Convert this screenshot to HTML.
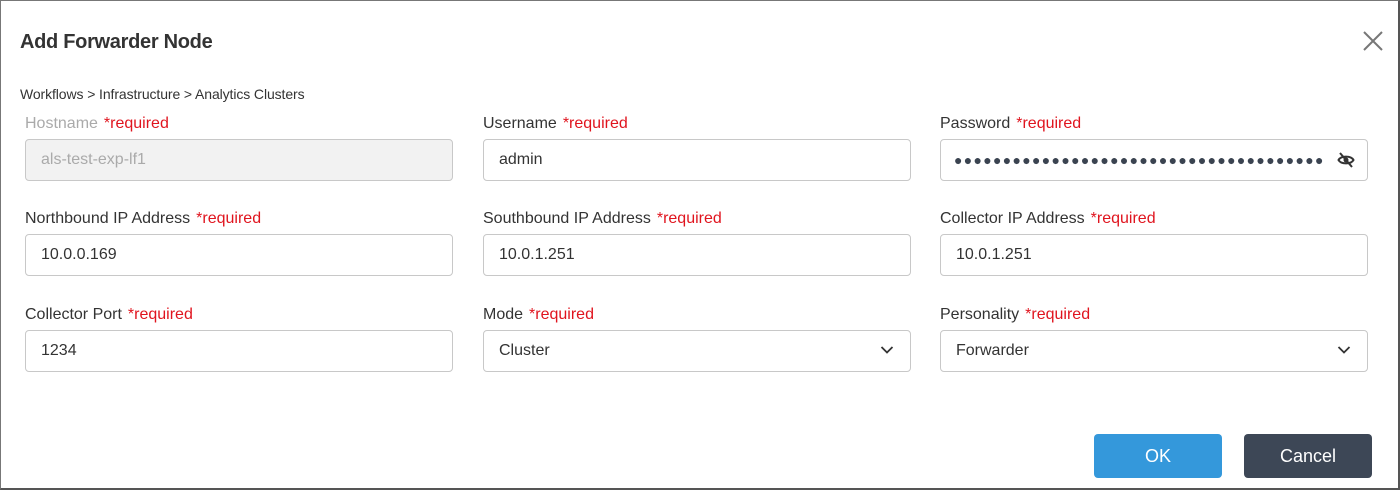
<!DOCTYPE html>
<html><head><meta charset="utf-8"><style>
*{box-sizing:border-box;margin:0;padding:0}
body{width:1400px;height:490px;background:#fff;font-family:"Liberation Sans",sans-serif;color:#333;position:relative;overflow:hidden}
.frame{position:absolute;left:0;top:0;width:1400px;height:490px;border:1px solid #777;border-right:2px solid #555;border-bottom:2px solid #555}
.title{position:absolute;left:20px;top:31px;font-size:20px;font-weight:bold;color:#333;letter-spacing:-0.3px}
.close{position:absolute;left:1362px;top:30px}
.crumb{position:absolute;left:20px;top:86px;font-size:14px;color:#333;letter-spacing:-0.1px}
.lbl{position:absolute;font-size:16px;color:#333}
.lbl span{color:#e0141e;margin-left:6px}
.lbl.dis{color:#aaa}
.in{position:absolute;width:428px;height:42px;border:1px solid #c8c8c8;border-radius:4px;font-size:16px;padding:0 15px;line-height:40px;color:#333;background:#fff}
.in.dis{background:#f2f2f2;color:#aaa}
.chev{position:absolute;right:16px;top:14px}
.btn{position:absolute;top:434px;width:128px;height:44px;border-radius:4px;color:#fff;font-size:18px;text-align:center;line-height:44px}
</style></head><body>
<div class="frame"></div>
<div class="title">Add Forwarder Node</div>
<svg class="close" width="22" height="22" viewBox="0 0 22 22"><path d="M2 2L20 20M20 2L2 20" stroke="#777" stroke-width="2"/></svg>
<div class="crumb">Workflows &gt; Infrastructure &gt; Analytics Clusters</div>

<div class="lbl dis" style="left:25px;top:115px">Hostname<span>*required</span></div>
<div class="in dis" style="left:25px;top:139px">als-test-exp-lf1</div>
<div class="lbl" style="left:483px;top:115px">Username<span>*required</span></div>
<div class="in" style="left:483px;top:139px">admin</div>
<div class="lbl" style="left:940px;top:115px">Password<span>*required</span></div>
<div class="in" style="left:940px;top:139px;font-size:14px;letter-spacing:1.3px;color:#3a4350;padding-left:13px">●●●●●●●●●●●●●●●●●●●●●●●●●●●●●●●●●●●●●●
<svg style="position:absolute;right:12px;top:11px" width="18" height="18" viewBox="0 0 18 18"><path d="M1.5 9C4 4.5 14 4.5 16.5 9C14 13.5 4 13.5 1.5 9Z" fill="none" stroke="#333" stroke-width="2"/><circle cx="9" cy="9" r="2.5" fill="#333"/><path d="M3 2L15 16" stroke="#333" stroke-width="2"/></svg></div>

<div class="lbl" style="left:25px;top:210px">Northbound IP Address<span>*required</span></div>
<div class="in" style="left:25px;top:234px">10.0.0.169</div>
<div class="lbl" style="left:483px;top:210px">Southbound IP Address<span>*required</span></div>
<div class="in" style="left:483px;top:234px">10.0.1.251</div>
<div class="lbl" style="left:940px;top:210px">Collector IP Address<span>*required</span></div>
<div class="in" style="left:940px;top:234px">10.0.1.251</div>

<div class="lbl" style="left:25px;top:306px">Collector Port<span>*required</span></div>
<div class="in" style="left:25px;top:330px">1234</div>
<div class="lbl" style="left:483px;top:306px">Mode<span>*required</span></div>
<div class="in" style="left:483px;top:330px">Cluster<svg class="chev" width="14" height="10" viewBox="0 0 14 10"><path d="M1.5 2L7 7.5L12.5 2" fill="none" stroke="#333" stroke-width="1.8"/></svg></div>
<div class="lbl" style="left:940px;top:306px">Personality<span>*required</span></div>
<div class="in" style="left:940px;top:330px">Forwarder<svg class="chev" width="14" height="10" viewBox="0 0 14 10"><path d="M1.5 2L7 7.5L12.5 2" fill="none" stroke="#333" stroke-width="1.8"/></svg></div>

<div class="btn" style="left:1094px;background:#3498db">OK</div>
<div class="btn" style="left:1244px;background:#3d4756">Cancel</div>
</body></html>
